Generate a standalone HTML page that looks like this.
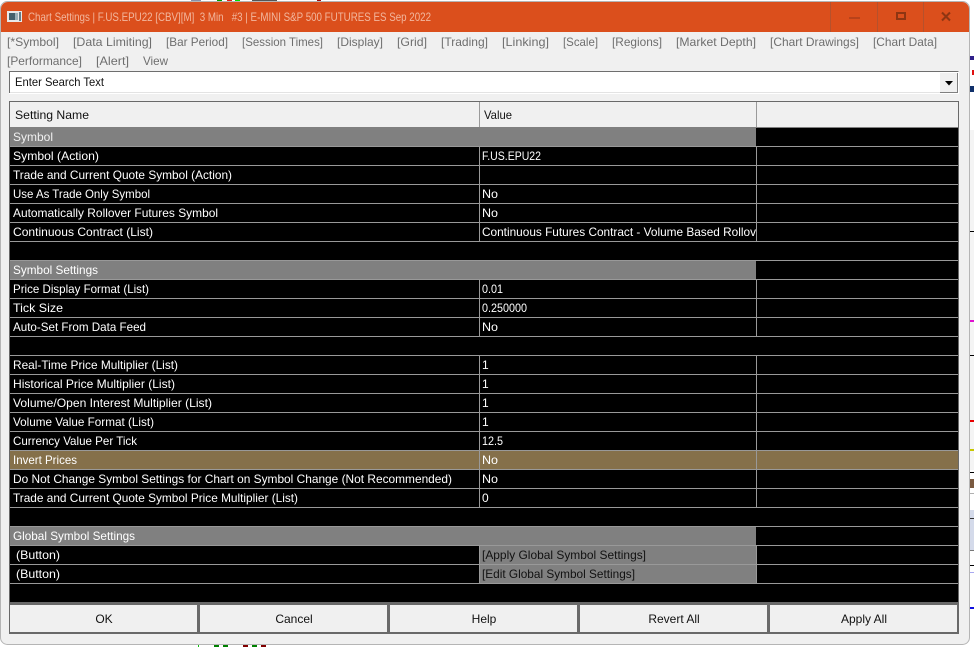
<!DOCTYPE html>
<html><head><meta charset="utf-8"><title>Chart Settings</title>
<style>
html,body{margin:0;padding:0;width:974px;height:647px;overflow:hidden;background:#fff}
svg{display:block;position:absolute;left:0;top:0}
text{font-family:"Liberation Sans",sans-serif;font-size:12px;white-space:pre}
.t{fill:#6e6e6e}
.w{fill:#fff}
.k{fill:#111}
.b{fill:#111;text-anchor:middle}
</style></head><body>
<svg width="974" height="647" viewBox="0 0 974 647" xmlns="http://www.w3.org/2000/svg">
<rect width="974" height="647" fill="#fff"/>
<!-- background chart bits -->
<rect x="970" y="56" width="4" height="4" fill="#30208a"/>
<rect x="972" y="70" width="2" height="5" fill="#e01010"/>
<rect x="970" y="86" width="4" height="6" fill="#10306a"/>
<rect x="969" y="130" width="5" height="340" fill="#f4f4f4"/>
<rect x="969" y="231" width="5" height="1" fill="#000"/>
<rect x="969" y="320" width="5" height="2" fill="#e010d0"/>
<rect x="969" y="355" width="5" height="1" fill="#000"/>
<rect x="969" y="420" width="5" height="2" fill="#e80000"/>
<rect x="969" y="449" width="5" height="2" fill="#c8c800"/>
<rect x="969" y="472" width="5" height="1" fill="#000"/>
<rect x="970" y="479" width="4" height="9" fill="#7a5a40"/>
<rect x="969" y="493" width="5" height="1" fill="#b0b0b0"/>
<rect x="969" y="510" width="5" height="40" fill="#d4daea"/>
<rect x="969" y="518" width="5" height="1" fill="#333"/>
<rect x="969" y="550" width="5" height="1" fill="#777"/>
<rect x="969" y="565" width="5" height="1" fill="#000"/>
<rect x="969" y="572" width="5" height="1" fill="#a8a8f0"/>
<rect x="969" y="607" width="5" height="2" fill="#1010e0"/>
<rect x="198" y="644" width="1" height="3" fill="#10c010"/>
<rect x="214" y="644" width="5" height="3" fill="#008000"/>
<rect x="223" y="644" width="5" height="3" fill="#008000"/>
<rect x="243" y="644" width="5" height="3" fill="#800000"/>
<rect x="252" y="644" width="5" height="3" fill="#008000"/>
<rect x="261" y="644" width="5" height="3" fill="#800000"/>
<rect x="191" y="0" width="10" height="2" fill="#8890a8"/>
<rect x="217" y="0" width="5" height="2" fill="#00a000"/>
<rect x="227" y="0" width="5" height="2" fill="#e02020"/>
<rect x="235" y="0" width="5" height="2" fill="#00e000"/>
<rect x="252" y="0" width="25" height="2" fill="#555"/>
<rect x="317" y="0" width="4" height="2" fill="#a01010"/>
<!-- window -->
<rect x="0.5" y="1.5" width="969" height="643" rx="7" fill="#f0f0f0" stroke="#b5b5b5"/>
<path d="M1 32V9a7 7 0 0 1 7-7H962a7 7 0 0 1 7 7V32Z" fill="#db4f1c"/>
<rect x="830" y="2" width="1" height="30" fill="#b5512c"/>
<rect x="877" y="2" width="1" height="30" fill="#b5512c"/>
<rect x="923" y="2" width="1" height="30" fill="#b5512c"/>
<rect x="849" y="17" width="11" height="2" fill="#b8421a"/>
<rect x="897" y="13" width="8" height="6" fill="none" stroke="#8e3512" stroke-width="2"/>
<path d="M942 12.5L950 20.5M950 12.5L942 20.5" stroke="#8e3512" stroke-width="2" fill="none"/>
<!-- app icon -->
<rect x="7" y="11" width="15" height="11" fill="#e8e8e8"/>
<rect x="9" y="13" width="6" height="7" fill="#44606c"/>
<rect x="15" y="13" width="3" height="7" fill="#9ab0b8"/>
<rect x="19" y="12" width="2" height="9" fill="#647c88"/>
<text x="28" y="21" fill="#f2b79e" textLength="403" lengthAdjust="spacingAndGlyphs">Chart Settings | F.US.EPU22 [CBV][M]  3 Min   #3 | E-MINI S&amp;P 500 FUTURES ES Sep 2022</text>
<!-- tabs -->
<g class="t">
<text x="7" y="46" textLength="52" lengthAdjust="spacingAndGlyphs">[*Symbol]</text>
<text x="73" y="46" textLength="79" lengthAdjust="spacingAndGlyphs">[Data Limiting]</text>
<text x="166" y="46" textLength="62" lengthAdjust="spacingAndGlyphs">[Bar Period]</text>
<text x="242" y="46" textLength="81" lengthAdjust="spacingAndGlyphs">[Session Times]</text>
<text x="337" y="46" textLength="46" lengthAdjust="spacingAndGlyphs">[Display]</text>
<text x="397" y="46" textLength="30" lengthAdjust="spacingAndGlyphs">[Grid]</text>
<text x="441" y="46" textLength="47" lengthAdjust="spacingAndGlyphs">[Trading]</text>
<text x="502" y="46" textLength="47" lengthAdjust="spacingAndGlyphs">[Linking]</text>
<text x="563" y="46" textLength="35" lengthAdjust="spacingAndGlyphs">[Scale]</text>
<text x="612" y="46" textLength="50" lengthAdjust="spacingAndGlyphs">[Regions]</text>
<text x="676" y="46" textLength="80" lengthAdjust="spacingAndGlyphs">[Market Depth]</text>
<text x="770" y="46" textLength="89" lengthAdjust="spacingAndGlyphs">[Chart Drawings]</text>
<text x="873" y="46" textLength="64" lengthAdjust="spacingAndGlyphs">[Chart Data]</text>
<text x="7" y="65" textLength="75" lengthAdjust="spacingAndGlyphs">[Performance]</text>
<text x="96" y="65" textLength="33" lengthAdjust="spacingAndGlyphs">[Alert]</text>
<text x="143" y="65" textLength="25" lengthAdjust="spacingAndGlyphs">View</text>
</g>
<!-- search -->
<rect x="9" y="71" width="950" height="23" fill="#fff"/>
<path d="M9.5 93V71.5H958.5" fill="none" stroke="#6e6e6e" stroke-width="1"/>
<rect x="10" y="92" width="948" height="1" fill="#e3e3e3"/>
<rect x="940" y="73" width="17" height="19" fill="#f0f0f0"/>
<path d="M957.5 73V92.5H940" fill="none" stroke="#808080"/>
<path d="M945 81H953L949 85.5Z" fill="#000"/>
<text class="k" x="15" y="86" textLength="89" lengthAdjust="spacingAndGlyphs">Enter Search Text</text>
<!-- grid -->
<rect x="9" y="101" width="950" height="533" fill="#696969"/>
<rect x="10" y="102" width="948" height="25" fill="#f0f0f0"/>
<rect x="10" y="127" width="948" height="475" fill="#000"/>
<rect x="479" y="102" width="1" height="25" fill="#9a9a9a"/>
<rect x="756" y="102" width="1" height="25" fill="#9a9a9a"/>
<rect x="10" y="127" width="948" height="1" fill="#808080"/>
<text class="k" x="15" y="119" textLength="74" lengthAdjust="spacingAndGlyphs">Setting Name</text>
<text class="k" x="484" y="119" textLength="28" lengthAdjust="spacingAndGlyphs">Value</text>
<!-- section and colored rows -->
<rect x="10" y="128" width="746" height="18" fill="#808080"/>
<rect x="10" y="261" width="746" height="18" fill="#808080"/>
<rect x="10" y="527" width="746" height="18" fill="#808080"/>
<rect x="10" y="451" width="948" height="18" fill="#85704a"/>
<rect x="480" y="546" width="277" height="18" fill="#808080"/>
<rect x="480" y="565" width="277" height="18" fill="#808080"/>
<!-- vertical column lines -->
<g fill="#999">
<rect x="479" y="147" width="1" height="94"/>
<rect x="756" y="147" width="1" height="94"/>
<rect x="479" y="280" width="1" height="56"/>
<rect x="756" y="280" width="1" height="56"/>
<rect x="479" y="356" width="1" height="152"/>
<rect x="756" y="356" width="1" height="152"/>
<rect x="479" y="546" width="1" height="37"/>
<rect x="756" y="546" width="1" height="37"/>
<!-- horizontal lines -->
<rect x="10" y="146" width="948" height="1"/>
<rect x="10" y="165" width="948" height="1"/>
<rect x="10" y="184" width="948" height="1"/>
<rect x="10" y="203" width="948" height="1"/>
<rect x="10" y="222" width="948" height="1"/>
<rect x="10" y="241" width="948" height="1"/>
<rect x="10" y="260" width="948" height="1"/>
<rect x="10" y="279" width="948" height="1"/>
<rect x="10" y="298" width="948" height="1"/>
<rect x="10" y="317" width="948" height="1"/>
<rect x="10" y="336" width="948" height="1"/>
<rect x="10" y="355" width="948" height="1"/>
<rect x="10" y="374" width="948" height="1"/>
<rect x="10" y="393" width="948" height="1"/>
<rect x="10" y="412" width="948" height="1"/>
<rect x="10" y="431" width="948" height="1"/>
<rect x="10" y="450" width="948" height="1"/>
<rect x="10" y="469" width="948" height="1"/>
<rect x="10" y="488" width="948" height="1"/>
<rect x="10" y="507" width="948" height="1"/>
<rect x="10" y="526" width="948" height="1"/>
<rect x="10" y="545" width="948" height="1"/>
<rect x="10" y="564" width="948" height="1"/>
<rect x="10" y="583" width="948" height="1"/>
</g>
<!-- labels -->
<g class="w">
<text x="13" y="141" fill="#f0f0f0" textLength="40" lengthAdjust="spacingAndGlyphs">Symbol</text>
<text x="13" y="160" textLength="86" lengthAdjust="spacingAndGlyphs">Symbol (Action)</text>
<text x="13" y="179" textLength="219" lengthAdjust="spacingAndGlyphs">Trade and Current Quote Symbol (Action)</text>
<text x="13" y="198" textLength="137" lengthAdjust="spacingAndGlyphs">Use As Trade Only Symbol</text>
<text x="13" y="217" textLength="205" lengthAdjust="spacingAndGlyphs">Automatically Rollover Futures Symbol</text>
<text x="13" y="236" textLength="140" lengthAdjust="spacingAndGlyphs">Continuous Contract (List)</text>
<text x="13" y="274" textLength="85" lengthAdjust="spacingAndGlyphs">Symbol Settings</text>
<text x="13" y="293" textLength="136" lengthAdjust="spacingAndGlyphs">Price Display Format (List)</text>
<text x="13" y="312" textLength="50" lengthAdjust="spacingAndGlyphs">Tick Size</text>
<text x="13" y="331" textLength="133" lengthAdjust="spacingAndGlyphs">Auto-Set From Data Feed</text>
<text x="13" y="369" textLength="165" lengthAdjust="spacingAndGlyphs">Real-Time Price Multiplier (List)</text>
<text x="13" y="388" textLength="162" lengthAdjust="spacingAndGlyphs">Historical Price Multiplier (List)</text>
<text x="13" y="407" textLength="199" lengthAdjust="spacingAndGlyphs">Volume/Open Interest Multiplier (List)</text>
<text x="13" y="426" textLength="141" lengthAdjust="spacingAndGlyphs">Volume Value Format (List)</text>
<text x="13" y="445" textLength="124" lengthAdjust="spacingAndGlyphs">Currency Value Per Tick</text>
<text x="13" y="464" textLength="64" lengthAdjust="spacingAndGlyphs">Invert Prices</text>
<text x="13" y="483" textLength="439" lengthAdjust="spacingAndGlyphs">Do Not Change Symbol Settings for Chart on Symbol Change (Not Recommended)</text>
<text x="13" y="502" textLength="285" lengthAdjust="spacingAndGlyphs">Trade and Current Quote Symbol Price Multiplier (List)</text>
<text x="13" y="540" textLength="122" lengthAdjust="spacingAndGlyphs">Global Symbol Settings</text>
<text x="16" y="559" textLength="44" lengthAdjust="spacingAndGlyphs">(Button)</text>
<text x="16" y="578" textLength="44" lengthAdjust="spacingAndGlyphs">(Button)</text>
<!-- values -->
<text x="482" y="160" textLength="59" lengthAdjust="spacingAndGlyphs">F.US.EPU22</text>
<text x="482" y="198" textLength="16" lengthAdjust="spacingAndGlyphs">No</text>
<text x="482" y="217" textLength="16" lengthAdjust="spacingAndGlyphs">No</text>
<text x="482" y="236" textLength="274" lengthAdjust="spacingAndGlyphs">Continuous Futures Contract - Volume Based Rollov</text>
<text x="482" y="293" textLength="21" lengthAdjust="spacingAndGlyphs">0.01</text>
<text x="482" y="312" textLength="45" lengthAdjust="spacingAndGlyphs">0.250000</text>
<text x="482" y="331" textLength="16" lengthAdjust="spacingAndGlyphs">No</text>
<text x="482" y="369">1</text>
<text x="482" y="388">1</text>
<text x="482" y="407">1</text>
<text x="482" y="426">1</text>
<text x="482" y="445" textLength="21" lengthAdjust="spacingAndGlyphs">12.5</text>
<text x="482" y="464" textLength="16" lengthAdjust="spacingAndGlyphs">No</text>
<text x="482" y="483" textLength="16" lengthAdjust="spacingAndGlyphs">No</text>
<text x="482" y="502">0</text>
</g>
<text class="k" x="482" y="559" textLength="164" lengthAdjust="spacingAndGlyphs">[Apply Global Symbol Settings]</text>
<text class="k" x="482" y="578" textLength="153" lengthAdjust="spacingAndGlyphs">[Edit Global Symbol Settings]</text>
<!-- buttons -->
<rect x="10" y="605" width="187" height="27" fill="#f0f0f0"/>
<rect x="200" y="605" width="187" height="27" fill="#f0f0f0"/>
<rect x="390" y="605" width="187" height="27" fill="#f0f0f0"/>
<rect x="580" y="605" width="187" height="27" fill="#f0f0f0"/>
<rect x="770" y="605" width="187" height="27" fill="#f0f0f0"/>
<text class="b" x="104" y="623">OK</text>
<text class="b" x="294" y="623">Cancel</text>
<text class="b" x="484" y="623">Help</text>
<text class="b" x="674" y="623">Revert All</text>
<text class="b" x="864" y="623">Apply All</text>
</svg>
</body></html>
